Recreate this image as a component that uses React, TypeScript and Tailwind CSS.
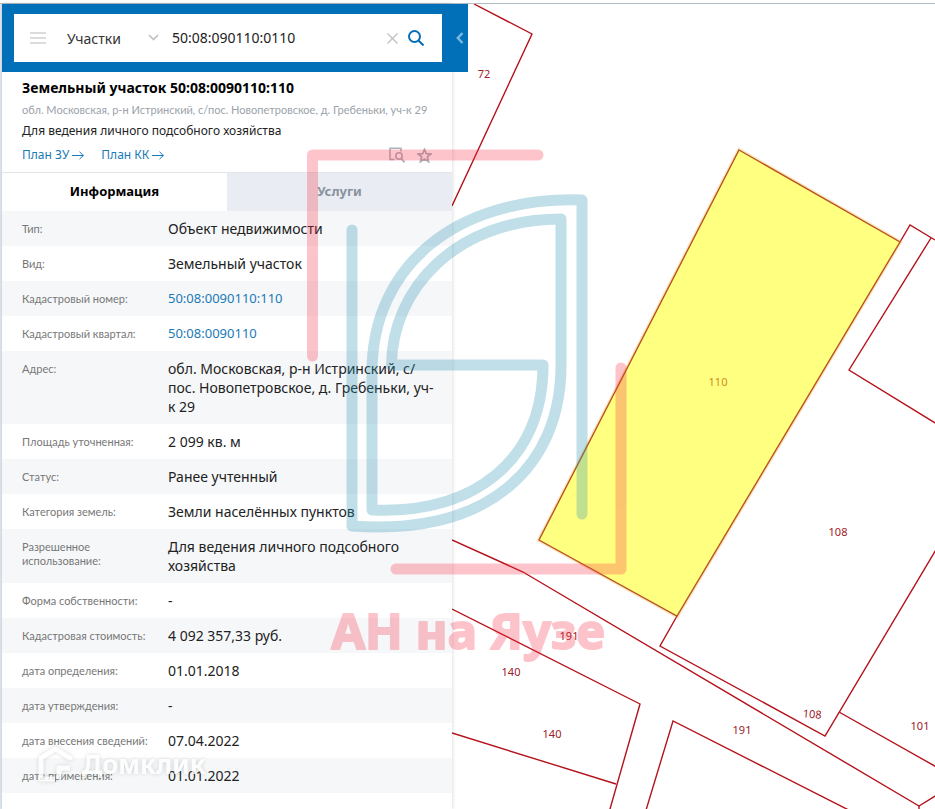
import { useState } from "react";
import type { ReactNode } from "react";
import clsx from "clsx";

type Detail = {
  label: string;
  value: string;
  href?: string;
};

type MapLabel = {
  text: string;
  x: number;
  y: number;
  rotate?: number;
};

const details: Detail[] = [
  { label: "Тип:", value: "Объект недвижимости" },
  { label: "Вид:", value: "Земельный участок" },
  { label: "Кадастровый номер:", value: "50:08:0090110:110", href: "#parcel" },
  { label: "Кадастровый квартал:", value: "50:08:0090110", href: "#quarter" },
  { label: "Адрес:", value: "обл. Московская, р-н Истринский, с/пос. Новопетровское, д. Гребеньки, уч-к 29" },
  { label: "Площадь уточненная:", value: "2 099 кв. м" },
  { label: "Статус:", value: "Ранее учтенный" },
  { label: "Категория земель:", value: "Земли населённых пунктов" },
  { label: "Разрешенное использование:", value: "Для ведения личного подсобного хозяйства" },
  { label: "Форма собственности:", value: "-" },
  { label: "Кадастровая стоимость:", value: "4 092 357,33 руб." },
  { label: "дата определения:", value: "01.01.2018" },
  { label: "дата утверждения:", value: "-" },
  { label: "дата внесения сведений:", value: "07.04.2022" },
  { label: "дата применения:", value: "01.01.2022" },
];

const boundaries = [
  "M474 4 L532 34 L452 206",
  "M900 242 L910 225 L935 240",
  "M931 238 L849 370 L940 426",
  "M677 616 L660 646 L825 736 L940 543",
  "M839 712 L940 769",
  "M452 540 L523 572 L919 806 L940 793",
  "M919 806 L919 830",
  "M452 609 L640 704 L604 830",
  "M452 733 L616 784",
  "M640 830 L673 721 L900 836",
];

const mapLabels: MapLabel[] = [
  { text: "72", x: 484, y: 78 },
  { text: "108", x: 838, y: 536 },
  { text: "108", x: 812, y: 718, rotate: 5 },
  { text: "101", x: 920, y: 730 },
  { text: "191", x: 742, y: 734 },
  { text: "191", x: 569, y: 640 },
  { text: "140", x: 511, y: 676 },
  { text: "140", x: 552, y: 738 },
];

function SearchHeader() {
  const [query, setQuery] = useState("50:08:090110:0110");

  return (
    <header className="relative z-10 -mr-4 flex items-center bg-[#026fb9] py-[10px] pl-3">
      <form className="flex h-12 min-w-0 flex-1 items-center bg-white pl-4" onSubmit={(e) => e.preventDefault()}>
        <button type="button" aria-label="Меню" className="shrink-0 text-[#dcdcdc]">
          <svg width="16" height="12" viewBox="0 0 16 12" stroke="currentColor" strokeWidth="2">
            <path d="M0 1H16M0 6H16M0 11H16" />
          </svg>
        </button>
        <div className="relative ml-[21px] w-24 shrink-0">
          <select
            aria-label="Раздел поиска"
            className="w-full appearance-none bg-transparent text-[14px] leading-5 text-[#333] outline-none"
          >
            <option>Участки</option>
          </select>
          <svg
            className="pointer-events-none absolute right-1 top-2 text-[#bfbfbf]"
            width="11"
            height="7"
            viewBox="0 0 11 7"
            fill="none"
            stroke="currentColor"
            strokeWidth="1.6"
          >
            <path d="M1 1L5.500 5.500L10 1" />
          </svg>
        </div>
        <input
          aria-label="Поиск"
          value={query}
          onChange={(e) => setQuery(e.target.value)}
          className="ml-[9px] min-w-0 flex-1 bg-transparent text-[14px] leading-5 text-[#222] outline-none"
        />
        <button type="button" aria-label="Очистить" onClick={() => setQuery("")} className="mr-[10px] text-[#bfbfbf]">
          <svg width="11" height="11" viewBox="0 0 11 11" stroke="currentColor" strokeWidth="1.300">
            <path d="M0.500 0.500L10.500 10.500M10.500 0.500L0.500 10.500" />
          </svg>
        </button>
        <button type="submit" aria-label="Найти" className="mr-[18px] text-[#026fb9]">
          <svg width="16" height="16" viewBox="0 0 16 16" fill="none" stroke="currentColor" strokeWidth="2">
            <circle cx="6.500" cy="6.500" r="5.500" />
            <path d="M10.500 10.500L15.500 15.500" />
          </svg>
        </button>
      </form>
      <button type="button" aria-label="Свернуть панель" className="flex w-[26px] justify-end pr-1 text-[#7fb9e0]">
        <svg width="8" height="12" viewBox="0 0 8 12" fill="none" stroke="currentColor" strokeWidth="2.400">
          <path d="M6.500 1L1.800 6L6.500 11" />
        </svg>
      </button>
    </header>
  );
}

function PlanLink({ href, children }: { href: string; children: ReactNode }) {
  return (
    <a href={href} className="flex items-center gap-[3px] text-[12px] leading-5 text-[#1a7ab8]">
      {children}
      <svg width="12" height="9" viewBox="0 0 12 9" fill="none" stroke="currentColor">
        <path d="M0 4.500H11.500M7.500 0.800L11.300 4.500L7.500 8.200" />
      </svg>
    </a>
  );
}

function ParcelSummary() {
  return (
    <div className="border-b border-[#e2e5ea] px-5 pb-[7px] pt-[6px]">
      <h1 className="text-[14px] font-bold leading-5 text-black">Земельный участок 50:08:0090110:110</h1>
      <p className="mt-1 whitespace-nowrap font-[Lato] text-[11px] leading-4 text-[#9aa2aa]">
        обл. Московская, р-н Истринский, с/пос. Новопетровское, д. Гребеньки, уч-к 29
      </p>
      <p className="mt-[3px] text-[12px] leading-5 text-[#222]">Для ведения личного подсобного хозяйства</p>
      <div className="mt-1 flex items-center">
        <PlanLink href="#plan-zu">План ЗУ</PlanLink>
        <span className="w-[17px]" />
        <PlanLink href="#plan-kk">План КК</PlanLink>
        <button type="button" aria-label="Показать на карте" className="ml-auto text-[#a9b1ba]">
          <svg width="16" height="16" viewBox="0 0 16 16" fill="none" stroke="currentColor" strokeWidth="1.500">
            <path d="M5.500 12.500H1V1.200H12V4.500" />
            <circle cx="10" cy="9" r="3.200" />
            <path d="M12.200 11.500L15.600 15.300" strokeWidth="1.800" />
          </svg>
        </button>
        <button type="button" aria-label="В избранное" className="ml-3 text-[#a9b1ba]">
          <svg width="15" height="15" viewBox="0 0 15 15" fill="none" stroke="currentColor" strokeWidth="1.700">
            <path d="M7.500 1.300L9.200 5.700L14 6L10.300 8.900L11.600 13.700L7.500 11L3.400 13.700L4.700 8.900L1 6L5.800 5.700Z" />
          </svg>
        </button>
      </div>
    </div>
  );
}

function DetailsTable() {
  return (
    <table className="w-full table-fixed border-collapse">
      <tbody>
        {details.map(({ label, value, href }) => (
          <tr key={label} className="odd:bg-[#f6f7f9]">
            <th
              scope="row"
              className="w-[166px] pl-5 pr-2 pt-[11px] text-left align-top font-[Lato] text-[11px] font-normal leading-[14px] text-[#777]"
            >
              {label}
            </th>
            <td className={clsx("py-2 pr-4 align-top leading-[19px] text-[#222]", href ? "text-[13px]" : "text-[14px]")}>
              {href ? (
                <a href={href} className="text-[#1a7ab8]">
                  {value}
                </a>
              ) : (
                value
              )}
            </td>
          </tr>
        ))}
      </tbody>
    </table>
  );
}

function InfoPanel() {
  const [tab, setTab] = useState<"info" | "services">("info");
  const tabClass = (active: boolean) =>
    clsx("h-[38px] flex-1 text-[13px] font-bold", active ? "bg-white text-black" : "bg-[#e9ecf2] text-[#8a929c]");

  return (
    <aside className="w-[450px] shrink-0 bg-white shadow-[0_0_4px_rgba(0,0,0,0.18)]">
      <SearchHeader />
      <ParcelSummary />
      <div role="tablist" className="flex">
        <button type="button" role="tab" aria-selected={tab === "info"} className={tabClass(tab === "info")} onClick={() => setTab("info")}>
          Информация
        </button>
        <button
          type="button"
          role="tab"
          aria-selected={tab === "services"}
          className={tabClass(tab === "services")}
          onClick={() => setTab("services")}
        >
          Услуги
        </button>
      </div>
      {tab === "info" && <DetailsTable />}
    </aside>
  );
}

function ParcelMap() {
  return (
    <div className="relative -z-10 min-w-0 flex-1 overflow-hidden">
      <svg className="absolute inset-0 size-full" role="img" aria-label="Кадастровая карта">
        <g transform="translate(-452 -4)">
          <g fill="none" stroke="#b5121b" strokeWidth="1.400">
            {boundaries.map((d) => (
              <path key={d} d={d} />
            ))}
          </g>
          <path d="M739 150L900 242L677 616L539 540Z" fill="none" stroke="#f3a23a" strokeOpacity="0.3" strokeWidth="4" />
          <path d="M739 150L900 242L677 616L539 540Z" fill="#ffff80" stroke="#b8561c" strokeWidth="1.400" />
          <g className="text-[11px]" textAnchor="middle" fill="#a02028">
            {mapLabels.map(({ text, x, y, rotate }) => (
              <text key={`${text}-${x}`} x={x} y={y} transform={rotate ? `rotate(${rotate} ${x} ${y})` : undefined}>
                {text}
              </text>
            ))}
            <text x="718" y="386" fill="#cf8a26">
              110
            </text>
          </g>
        </g>
      </svg>
    </div>
  );
}

function AgencyWatermark() {
  return (
    <svg className="pointer-events-none absolute left-0 top-0 z-20" width="640" height="670" viewBox="0 0 640 670">
      <g fill="none" strokeWidth="11" strokeLinecap="round" strokeLinejoin="round">
        <g stroke="#f7283f" opacity="0.27">
          <path d="M312.500 356V155H538" />
          <path d="M621 368V569H396" />
        </g>
        <path
          d="M582 514V200C455 196 372 267 372 372V510C475 514 543 460 543 365H391.500C392 290 455 219 561 219V365C561 466 490 536 352 526V230"
          stroke="#2d94b2"
          opacity="0.3"
        />
      </g>
      <text
        x="468"
        y="649"
        textAnchor="middle"
        className="text-[49px] font-bold"
        fill="#f7283f"
        stroke="#f7283f"
        strokeWidth="2"
        strokeLinejoin="round"
        opacity="0.27"
      >
        АН на Яузе
      </text>
    </svg>
  );
}

function DomclickWatermark() {
  return (
    <div className="pointer-events-none absolute left-[38px] top-[745px] z-20 flex items-center gap-2 text-white opacity-75 drop-shadow-[0_0_2px_rgba(0,0,0,0.2)]">
      <svg width="36" height="38" viewBox="0 0 36 38" fill="none" stroke="currentColor" strokeWidth="5">
        <path d="M32 15V13L17.500 4L3 13V34H17M32 23H21V34" strokeLinejoin="round" />
      </svg>
      <span className="text-[26px] font-bold leading-8">Домклик</span>
    </div>
  );
}

export default function App() {
  return (
    <main className="relative isolate flex min-h-screen flex-col overflow-hidden bg-white font-['Noto_Sans','Open_Sans',sans-serif]">
      <div className="h-1 border-b border-[#b4bcc6]" />
      <div className="flex flex-1 border-l-2 border-[#e3ebf3]">
        <InfoPanel />
        <ParcelMap />
      </div>
      <AgencyWatermark />
      <DomclickWatermark />
    </main>
  );
}
